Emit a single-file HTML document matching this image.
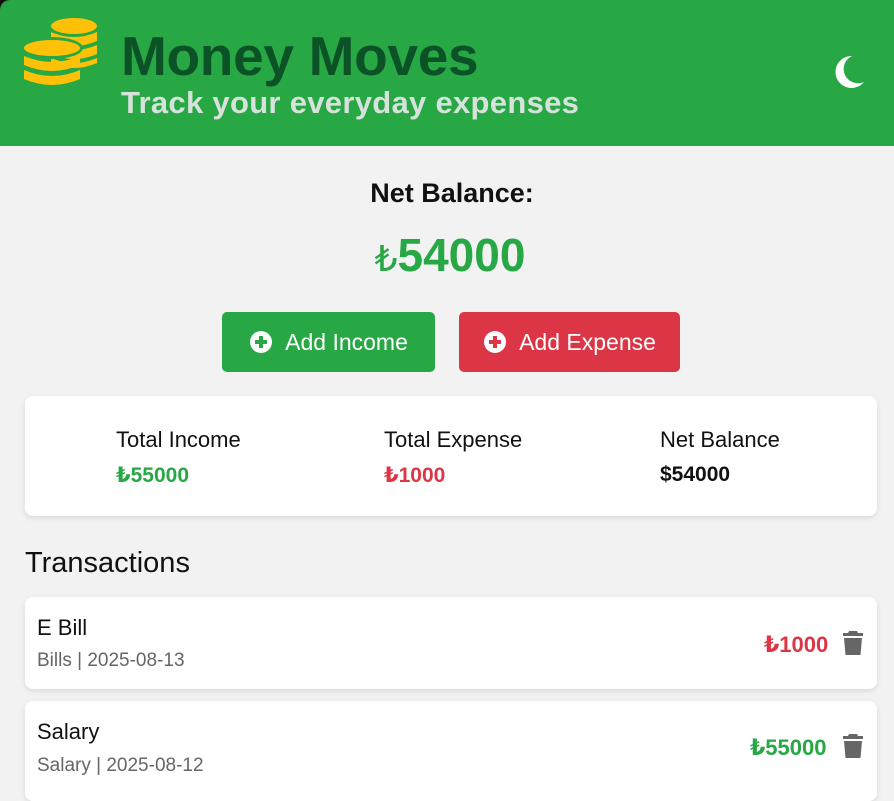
<!DOCTYPE html>
<html><head><meta charset="utf-8">
<style>
*{margin:0;padding:0;box-sizing:border-box}
body{width:894px;height:790px;overflow:hidden;background:#f2f2f2;font-family:"Liberation Sans","DejaVu Sans",sans-serif;position:relative;color:#111}
.hdr{position:absolute;left:0;top:0;width:894px;height:146px;background:#28a745;border-top-left-radius:10px}
.abs{position:absolute;white-space:nowrap}
.card{position:absolute;background:#fff;border-radius:8px;box-shadow:0 2px 6px rgba(0,0,0,.1)}
.btn{position:absolute;top:312px;height:60px;border-radius:5px;color:#fff;font-size:23px;display:flex;align-items:center;justify-content:center;gap:12px}
</style></head><body>
<div style="position:absolute;left:0;top:0;width:12px;height:12px;background:#111"></div>
<div class="hdr"></div>
<svg class="abs" style="left:22px;top:16px" width="78" height="76" viewBox="0 0 78 76">
<g fill="#ffc107">
<ellipse cx="52" cy="10" rx="23" ry="8"/>
<path d="M29 16 q23 10 46 0 v9 q-23 10 -46 0z"/>
<path d="M29 29 q23 10 46 0 v9 q-23 10 -46 0z"/>
<path d="M29 42 q23 10 46 0 v5 q-23 10 -46 0z"/>
</g>
<ellipse cx="30" cy="32" rx="31" ry="11" fill="#28a745"/>
<g fill="#ffc107">
<ellipse cx="30" cy="32" rx="28" ry="8"/>
<path d="M2 40 q28 12 56 0 v9 q-28 12 -56 0z"/>
<path d="M2 54 q28 12 56 0 v9 q-28 12 -56 0z"/>
</g></svg>
<div class="abs" style="left:121px;top:24px;font-size:55px;font-weight:bold;color:#0b5227;letter-spacing:-0.3px">Money Moves</div>
<div class="abs" style="left:121px;top:85px;font-size:31px;font-weight:bold;color:#d8e2dc;letter-spacing:0.3px">Track your everyday expenses</div>
<svg class="abs" style="left:830px;top:54px" width="36" height="36" viewBox="0 0 36 36"><path d="M22 2 A16 16 0 1 0 34 28 A13 13 0 0 1 22 2z" fill="#fff"/></svg>

<div class="abs" style="left:0;width:904px;text-align:center;top:178px;font-size:27px;font-weight:bold">Net Balance:</div>
<div class="abs" style="left:0;width:900px;text-align:center;top:228px;font-size:46px;font-weight:bold;color:#28a745"><span style="font-weight:normal;font-size:36px">₺</span>54000</div>

<div class="btn" style="left:222px;width:213px;background:#28a745"><svg width="24" height="24" viewBox="0 0 24 24"><circle cx="12" cy="12" r="11" fill="#fff"/><path d="M12 6v12M6 12h12" stroke="#28a745" stroke-width="4"/></svg>Add Income</div>
<div class="btn" style="left:459px;width:221px;background:#dc3545"><svg width="24" height="24" viewBox="0 0 24 24"><circle cx="12" cy="12" r="11" fill="#fff"/><path d="M12 6v12M6 12h12" stroke="#dc3545" stroke-width="4"/></svg>Add Expense</div>

<div class="card" style="left:25px;top:396px;width:852px;height:120px"></div>
<div class="abs" style="left:116px;top:427px;font-size:22px">Total Income</div>
<div class="abs" style="left:116px;top:463px;font-size:21px;font-weight:bold;color:#28a745">₺55000</div>
<div class="abs" style="left:384px;top:427px;font-size:22px">Total Expense</div>
<div class="abs" style="left:384px;top:463px;font-size:21px;font-weight:bold;color:#dc3545">₺1000</div>
<div class="abs" style="left:660px;top:427px;font-size:22px">Net Balance</div>
<div class="abs" style="left:660px;top:463px;font-size:21px;font-weight:bold">$54000</div>

<div class="abs" style="left:25px;top:547px;font-size:29px">Transactions</div>

<div class="card" style="left:25px;top:597px;width:852px;height:92px"></div>
<div class="abs" style="left:37px;top:615px;font-size:22px">E Bill</div>
<div class="abs" style="left:37px;top:650px;font-size:19px;color:#666">Bills | 2025-08-13</div>
<div class="abs" style="left:764px;top:632px;font-size:22px;font-weight:bold;color:#dc3545">₺1000</div>
<div class="card" style="left:25px;top:701px;width:852px;height:100px"></div>
<div class="abs" style="left:37px;top:719px;font-size:22px">Salary</div>
<div class="abs" style="left:37px;top:755px;font-size:19px;color:#666">Salary | 2025-08-12</div>
<div class="abs" style="left:750px;top:735px;font-size:22px;font-weight:bold;color:#28a745">₺55000</div>
<svg class="abs" style="left:842px;top:630px" width="22" height="26" viewBox="0 0 22 26"><path d="M7 1h8l1 2h5v3H1V3h5z M2 8h18l-1.5 17h-15z" fill="#666"/></svg>
<svg class="abs" style="left:842px;top:733px" width="22" height="26" viewBox="0 0 22 26"><path d="M7 1h8l1 2h5v3H1V3h5z M2 8h18l-1.5 17h-15z" fill="#666"/></svg>
</body></html>
